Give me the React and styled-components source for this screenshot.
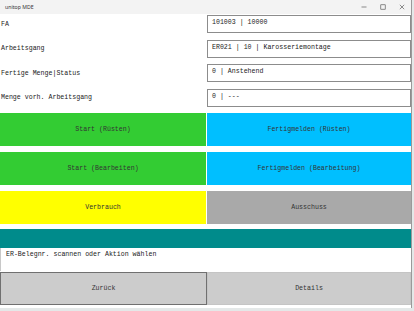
import styled, { createGlobalStyle } from "styled-components";

const Global = createGlobalStyle`
  html, body {
    margin: 0;
    padding: 0;
    background: #e4e8e8;
    overflow: hidden;
  }
`;

const Window = styled.div`
  width: 411px;
  height: 308px;
  background: #ffffff;
  border-right: 1px solid #9a9a9a;
  display: flex;
  flex-direction: column;
  font-family: "Liberation Mono", "DejaVu Sans Mono", monospace;
  font-size: 6.6px;
  color: #222;
`;

const TitleBar = styled.div`
  height: 14px;
  background: #f3f3f3;
  display: flex;
  align-items: center;
  padding-left: 5px;
  font-family: "Noto Sans", "Liberation Sans", sans-serif;
  font-size: 5.2px;
  color: #333;
`;

const TitleText = styled.span`
  flex: 1;
`;

const Control = styled.span`
  width: 19px;
  display: flex;
  justify-content: center;
  align-items: center;
  color: #444;
`;

const Form = styled.div`
  display: flex;
  flex-direction: column;
  gap: 6.5px;
  padding-top: 1px;
`;

const Field = styled.div`
  display: grid;
  grid-template-columns: 207px 1fr;
  height: 18px;
`;

const Label = styled.div`
  display: flex;
  align-items: center;
  padding-left: 1px;
`;

const ValueBox = styled.div`
  border: 1px solid #8c8c8c;
  padding: 3px 4px 0;
  box-sizing: border-box;
  height: 18px;
  line-height: 8px;
`;

const ButtonGrid = styled.div`
  margin-top: 6.5px;
  display: grid;
  grid-template-columns: 206px 1fr;
  grid-auto-rows: 33px;
  column-gap: 1px;
  row-gap: 6px;
`;

const ActionButton = styled.div`
  background: ${(p) => p.$bg};
  display: flex;
  align-items: center;
  justify-content: center;
  color: #333;
`;

const StatusBar = styled.div`
  margin-top: 5px;
  height: 19px;
  background: #008b8b;
`;

const Message = styled.div`
  height: 23px;
  box-sizing: border-box;
  padding: 3px 5px 0;
  border-left: 1px solid #c8c8c8;
  line-height: 8px;
`;

const Footer = styled.div`
  margin-top: 1px;
  display: grid;
  grid-template-columns: 207px 1fr;
  height: 33px;
`;

const FooterButton = styled.div`
  background: #cccccc;
  border: 1px solid ${(p) => (p.$focused ? "#707070" : "#c4c4c4")};
  box-sizing: border-box;
  display: flex;
  align-items: center;
  justify-content: center;
  color: #333;
`;

const fields = [
  ["FA", "101003 | 10000"],
  ["Arbeitsgang", "ER021 | 10 | Karosseriemontage"],
  ["Fertige Menge|Status", "0 | Anstehend"],
  ["Menge vorh. Arbeitsgang", "0 | ---"],
];

const actions = [
  ["Start (Rüsten)", "#33cc33"],
  ["Fertigmelden (Rüsten)", "#00bfff"],
  ["Start (Bearbeiten)", "#33cc33"],
  ["Fertigmelden (Bearbeitung)", "#00bfff"],
  ["Verbrauch", "#ffff00"],
  ["Ausschuss", "#a9a9a9"],
];

export default function App() {
  return (
    <>
      <Global />
      <Window>
        <TitleBar>
          <TitleText>unitop MDE</TitleText>
          <Control>
            <svg width="6" height="6" viewBox="0 0 6 6">
              <path d="M0.5 3h5" stroke="#444" strokeWidth="0.6" />
            </svg>
          </Control>
          <Control>
            <svg width="6" height="6" viewBox="0 0 6 6">
              <rect x="0.8" y="0.8" width="4.4" height="4.4" fill="none" stroke="#444" strokeWidth="0.6" />
            </svg>
          </Control>
          <Control>
            <svg width="6" height="6" viewBox="0 0 6 6">
              <path d="M0.8 0.8l4.4 4.4M5.2 0.8l-4.4 4.4" stroke="#444" strokeWidth="0.6" />
            </svg>
          </Control>
        </TitleBar>
        <Form>
          {fields.map(([label, value]) => (
            <Field key={label}>
              <Label>{label}</Label>
              <ValueBox>{value}</ValueBox>
            </Field>
          ))}
        </Form>
        <ButtonGrid>
          {actions.map(([text, bg]) => (
            <ActionButton key={text} $bg={bg}>
              {text}
            </ActionButton>
          ))}
        </ButtonGrid>
        <StatusBar />
        <Message>ER-Belegnr. scannen oder Aktion wählen</Message>
        <Footer>
          <FooterButton $focused>Zurück</FooterButton>
          <FooterButton>Details</FooterButton>
        </Footer>
      </Window>
    </>
  );
}
